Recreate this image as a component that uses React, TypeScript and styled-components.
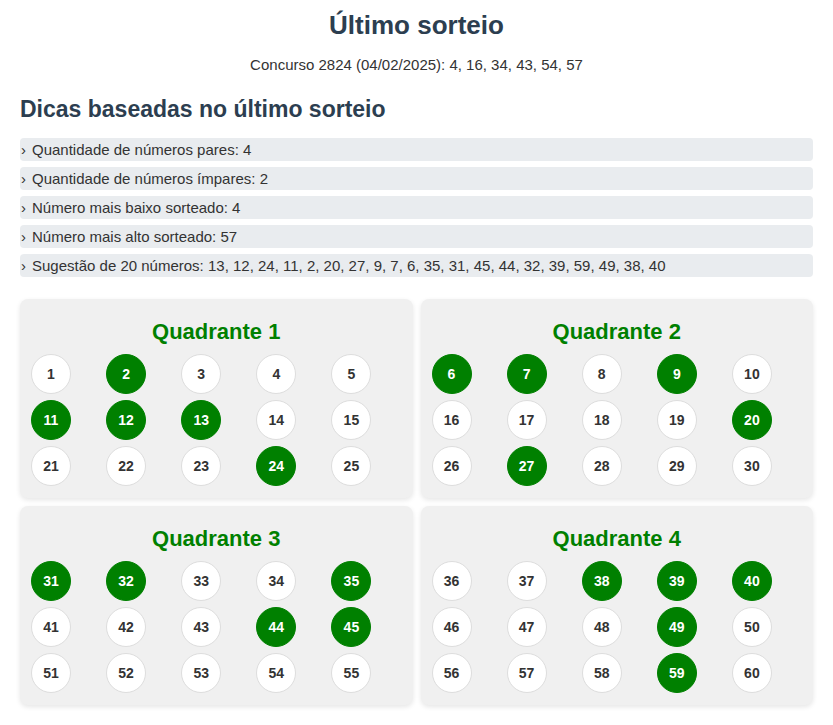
import React from 'react'
import { styled, createGlobalStyle } from 'styled-components'

const GlobalStyle = createGlobalStyle`
  body {
    margin: 0;
    background: #ffffff;
    font-family: "Liberation Sans", Arial, sans-serif;
    color: #333333;
  }
`

const drawn = [4, 16, 34, 43, 54, 57]
const suggestion = [13, 12, 24, 11, 2, 20, 27, 9, 7, 6, 35, 31, 45, 44, 32, 39, 59, 49, 38, 40]

const tips = [
    'Quantidade de números pares: 4',
    'Quantidade de números ímpares: 2',
    'Número mais baixo sorteado: 4',
    'Número mais alto sorteado: 57',
    `Sugestão de 20 números: ${suggestion.join(', ')}`,
]

// each quadrant holds 3 rows of 5 numbers
const quadrantNumbers = (q: number) => {
    const colOffset = q % 2 === 0 ? 0 : 5
    const rowOffset = q < 2 ? 0 : 30
    const nums: number[] = []
    for (let r = 0; r < 3; r++) {
        for (let c = 0; c < 5; c++) {
            nums.push(rowOffset + r * 10 + colOffset + c + 1)
        }
    }
    return nums
}

const App = () => {
    return (
        <Page>
            <GlobalStyle />
            <Title>Último sorteio</Title>
            <Subtitle>Concurso 2824 (04/02/2025): {drawn.join(', ')}</Subtitle>

            <SectionTitle>Dicas baseadas no último sorteio</SectionTitle>
            <TipList>
                {tips.map((t) => (
                    <Tip key={t}>{t}</Tip>
                ))}
            </TipList>

            <Quadrants>
                {[0, 1, 2, 3].map((q) => (
                    <Card key={q}>
                        <CardTitle>Quadrante {q + 1}</CardTitle>
                        <Balls>
                            {quadrantNumbers(q).map((n) => (
                                <Ball key={n} $active={suggestion.includes(n)}>{n}</Ball>
                            ))}
                        </Balls>
                    </Card>
                ))}
            </Quadrants>
        </Page>
    )
}

export default App

const Page = styled.div`
padding: 0 20px 18px;
`

const Title = styled.h1`
margin: 10px 0 0;
font-size: 26px;
line-height: 30px;
font-weight: bold;
text-align: center;
color: #2c3e50;
`

const Subtitle = styled.p`
margin: 16px 0 0;
font-size: 15px;
line-height: 17px;
text-align: center;
color: #333;
`

const SectionTitle = styled.h2`
margin: 23px 0 0;
font-size: 23px;
line-height: 26px;
font-weight: bold;
color: #2c3e50;
`

const TipList = styled.ul`
list-style: none;
margin: 16px 0 0;
padding: 0;
display: flex;
flex-direction: column;
gap: 6px;
`

const Tip = styled.li`
background: #e9ecef;
border-radius: 4px;
font-size: 15px;
line-height: 17px;
padding: 3px 0 3px 1px;
color: #333;

&::before {
  content: "›";
  margin-right: 6px;
}
`

const Quadrants = styled.div`
margin-top: 22px;
display: grid;
grid-template-columns: 1fr 1fr;
gap: 8px;
`

const Card = styled.div`
background: #f0f0f0;
border-radius: 8px;
box-shadow: 0 2px 5px rgba(0, 0, 0, 0.1);
padding: 20px 11px 12px;
`

const CardTitle = styled.h3`
margin: 0 0 10px;
font-size: 22px;
line-height: 25px;
font-weight: bold;
text-align: center;
color: #008000;
`

const Balls = styled.div`
display: grid;
grid-template-columns: repeat(5, 1fr);
column-gap: 5px;
row-gap: 6px;
justify-items: start;
`

const Ball = styled.div<{ $active?: boolean }>`
width: 40px;
height: 40px;
box-sizing: border-box;
border-radius: 50%;
display: flex;
align-items: center;
justify-content: center;
font-size: 14px;
font-weight: bold;
background: ${({ $active }) => $active ? '#008000' : '#ffffff'};
color: ${({ $active }) => $active ? '#ffffff' : '#333333'};
border: 1px solid ${({ $active }) => $active ? '#008000' : '#dddddd'};
`
